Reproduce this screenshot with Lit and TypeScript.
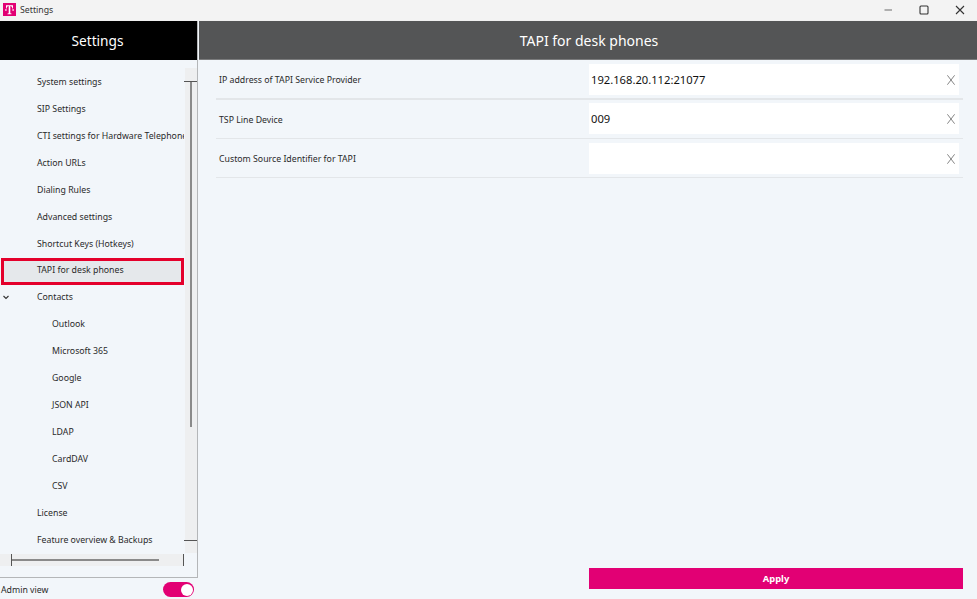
import { LitElement, html, css, svg } from "lit";
import { customElement } from "lit/decorators.js";

const tree: { t: string; lvl: number; sel?: boolean; open?: boolean }[] = [
  { t: "System settings", lvl: 1 },
  { t: "SIP Settings", lvl: 1 },
  { t: "CTI settings for Hardware Telephones", lvl: 1 },
  { t: "Action URLs", lvl: 1 },
  { t: "Dialing Rules", lvl: 1 },
  { t: "Advanced settings", lvl: 1 },
  { t: "Shortcut Keys (Hotkeys)", lvl: 1 },
  { t: "TAPI for desk phones", lvl: 1, sel: true },
  { t: "Contacts", lvl: 1, open: true },
  { t: "Outlook", lvl: 2 },
  { t: "Microsoft 365", lvl: 2 },
  { t: "Google", lvl: 2 },
  { t: "JSON API", lvl: 2 },
  { t: "LDAP", lvl: 2 },
  { t: "CardDAV", lvl: 2 },
  { t: "CSV", lvl: 2 },
  { t: "License", lvl: 1 },
  { t: "Feature overview & Backups", lvl: 1 },
];

const fields = [
  { l: "IP address of TAPI Service Provider", v: "192.168.20.112:21077" },
  { l: "TSP Line Device", v: "009" },
  { l: "Custom Source Identifier for TAPI", v: "" },
];

@customElement("app-root")
export class AppRoot extends LitElement {
  static styles = css`
    :host {
      display: grid;
      grid-template-rows: 20px 1fr;
      width: 977px;
      height: 599px;
      overflow: hidden;
      background: #fff;
      font-family: "Noto Sans", "Liberation Sans", sans-serif;
      font-size: 8.75px;
      color: #222;
    }
    .titlebar {
      display: flex;
      align-items: center;
      background: #f3f3f3;
      padding: 0 0 1px 3px;
      box-sizing: border-box;
      gap: 4px;
      font-size: 8.75px;
      color: #333;
    }
    .logo { width: 13px; height: 13px; display: block; }
    .winbtns { margin: 0 -1px -1px auto; display: flex; }
    .winbtn { width: 36px; height: 20px; display: flex; align-items: center; justify-content: center; }
    .winbtn svg { display: block; width: 10px; height: 10px; }
    .body {
      display: grid;
      grid-template-columns: 198px 1fr;
      min-height: 0;
      background: #f2f6fa;
      border-top: 1px solid #f0f0f0;
    }
    .side { display: grid; grid-template-rows: 1fr 21px; min-height: 0; }
    .panel {
      display: grid;
      grid-template-rows: 39px 1fr;
      border-right: 1px solid #b4b6b8;
      border-bottom: 1px solid #b4b6b8;
      min-height: 0;
      position: relative;
    }
    .side-head {
      background: #000;
      color: #fff;
      display: flex;
      align-items: center;
      justify-content: center;
      font-size: 13.7px;
      padding-right: 2px;
    }
    .tree { padding: 8.5px 13px 0 0; overflow: hidden; min-height: 0; }
    .row {
      height: 26.94px;
      display: flex;
      align-items: center;
      white-space: nowrap;
      overflow: hidden;
      font-size: 8.75px;
      color: #2a2a2a;
      position: relative;
    }
    .l1 { padding-left: 37px; }
    .l2 { padding-left: 52px; }
    .sel {
      background: #e5e8eb;
      outline: 3px solid #e4002b;
      outline-offset: -3px;
      margin: 0.5px 0 -0.5px 1px;
      padding-left: 36px;
      padding-bottom: 2px;
      box-sizing: border-box;
    }
    .chev { position: absolute; left: 3px; top: 11px; width: 6px; height: 5px; }
    .vbar {
      position: absolute;
      right: 0;
      top: 47px;
      width: 12px;
      height: 485px;
      background: #eeeff0;
    }
    .vbar .cap-t, .vbar .cap-b { position: absolute; left: -1px; right: 0; height: 1px; background: #555; }
    .vbar .cap-t { top: 13px; }
    .vbar .cap-b { top: 472px; }
    .vbar .thumb { position: absolute; left: 5px; top: 14px; width: 2px; height: 345px; background: #8a8a8a; }
    .hbar {
      position: absolute;
      left: 0;
      right: 13px;
      top: 533px;
      height: 12px;
      background: #eeeff0;
    }
    .hbar .cap-l, .hbar .cap-r { position: absolute; top: 0; bottom: 0; width: 1px; background: #555; }
    .hbar .cap-l { left: 11px; }
    .hbar .cap-r { left: 183px; }
    .hbar .thumb { position: absolute; left: 12px; top: 5px; width: 147px; height: 2px; background: #8a8a8a; }
    .admin {
      display: flex;
      align-items: center;
      justify-content: space-between;
      padding: 2px 4px 0 1px;
      box-sizing: border-box;
      font-size: 8.75px;
      color: #2a2a2a;
    }
    .toggle {
      width: 31px;
      height: 15px;
      border-radius: 8px;
      background: #e20074;
      display: flex;
      align-items: center;
      justify-content: flex-end;
      padding-right: 1px;
      box-sizing: border-box;
    }
    .knob { width: 12px; height: 12px; border-radius: 50%; background: #fff; }
    .main { display: grid; grid-template-rows: 39px 1fr auto; margin-left: 1px; min-height: 0; }
    .main-head {
      background: #545556;
      border-bottom: 1px solid #7a7b7c;
      color: #fff;
      display: flex;
      align-items: center;
      justify-content: center;
      font-size: 14px;
      padding-left: 2px;
    }
    .form { padding: 0 14px 0 17px; }
    .field {
      display: grid;
      grid-template-columns: 373px 1fr;
      align-items: center;
      padding: 4px 0 3px;
      border-bottom: 1px solid #e3e6e9;
    }
    .field:first-child { border-bottom-width: 2px; }
    .field:nth-child(2) { padding: 3px 0 4px; }
    .field:nth-child(2) .label { padding-top: 2px; }
    .label {
      padding-left: 3px;
      font-size: 8.75px;
      color: #2a2a2a;
    }
    .input {
      height: 31px;
      margin-right: 4px;
      background: #fff;
      display: flex;
      align-items: center;
      justify-content: space-between;
      padding: 0 4px 0 2px;
      font-size: 11.2px;
      color: #111;
    }
    .x { width: 8px; height: 10px; display: block; }
    .foot { padding: 0 14px 10px 390px; }
    .apply {
      height: 21px;
      background: #e20074;
      color: #fff;
      display: flex;
      align-items: center;
      justify-content: center;
      font-weight: 700;
      font-size: 9.4px;
    }
  `;

  render() {
    return html`
      <div class="titlebar">
        <svg class="logo" viewBox="0 0 13 13">
          <rect width="13" height="13" fill="#e20074" />
          <path d="M3 2.2h7v3.2h-.7c0-1.4-.7-2.3-2-2.4v6.6c0 .8.3 1 1.2 1v.7H4.5v-.7c.9 0 1.2-.2 1.2-1V3c-1.3.1-2 1-2 2.4H3z" fill="#fff" />
          <path d="M2.2 6.3h1.4v1.4H2.2zM9.4 6.3h1.4v1.4H9.4z" fill="#fff" />
        </svg>
        <span>Settings</span>
        <div class="winbtns">
          <div class="winbtn">${this.icon("M1.5 5h7.5", "#8a8a8a", 1.3)}</div>
          <div class="winbtn">${this.icon("M2 1h6q1 0 1 1v6q0 1-1 1H2q-1 0-1-1V2q0-1 1-1z", "#333", 1.1)}</div>
          <div class="winbtn">${this.icon("M1 1l8 8M9 1l-8 8", "#333", 1.1)}</div>
        </div>
      </div>
      <div class="body">
        <div class="side">
          <div class="panel">
            <div class="side-head">Settings</div>
            <div class="tree">
              ${tree.map(
                (r) => html`<div class="row ${r.lvl === 2 ? "l2" : "l1"} ${r.sel ? "sel" : ""}">
                  ${r.open
                    ? html`<svg class="chev" viewBox="0 0 6 5"><path d="M.5 1l2.5 2.5L5.5 1" fill="none" stroke="#333" stroke-width="1.1" /></svg>`
                    : ""}
                  ${r.t}
                </div>`
              )}
            </div>
            <div class="vbar"><div class="cap-t"></div><div class="thumb"></div><div class="cap-b"></div></div>
            <div class="hbar"><div class="cap-l"></div><div class="thumb"></div><div class="cap-r"></div></div>
          </div>
          <div class="admin">
            <span>Admin view</span>
            <div class="toggle"><div class="knob"></div></div>
          </div>
        </div>
        <div class="main">
          <div class="main-head">TAPI for desk phones</div>
          <div class="form">
            ${fields.map(
              (f) => html`<div class="field">
                <div class="label">${f.l}</div>
                <div class="input">
                  <span>${f.v}</span>
                  <svg class="x" viewBox="0 0 8 10"><path d="M.4.3l7.2 9.4M7.6.3L.4 9.7" fill="none" stroke="#777" stroke-width=".9" /></svg>
                </div>
              </div>`
            )}
          </div>
          <div class="foot"><div class="apply">Apply</div></div>
        </div>
      </div>
    `;
  }

  private icon(d: string, color: string, w: number) {
    return html`<svg viewBox="0 0 10 10">${svg`<path d=${d} fill="none" stroke=${color} stroke-width=${w} />`}</svg>`;
  }
}
